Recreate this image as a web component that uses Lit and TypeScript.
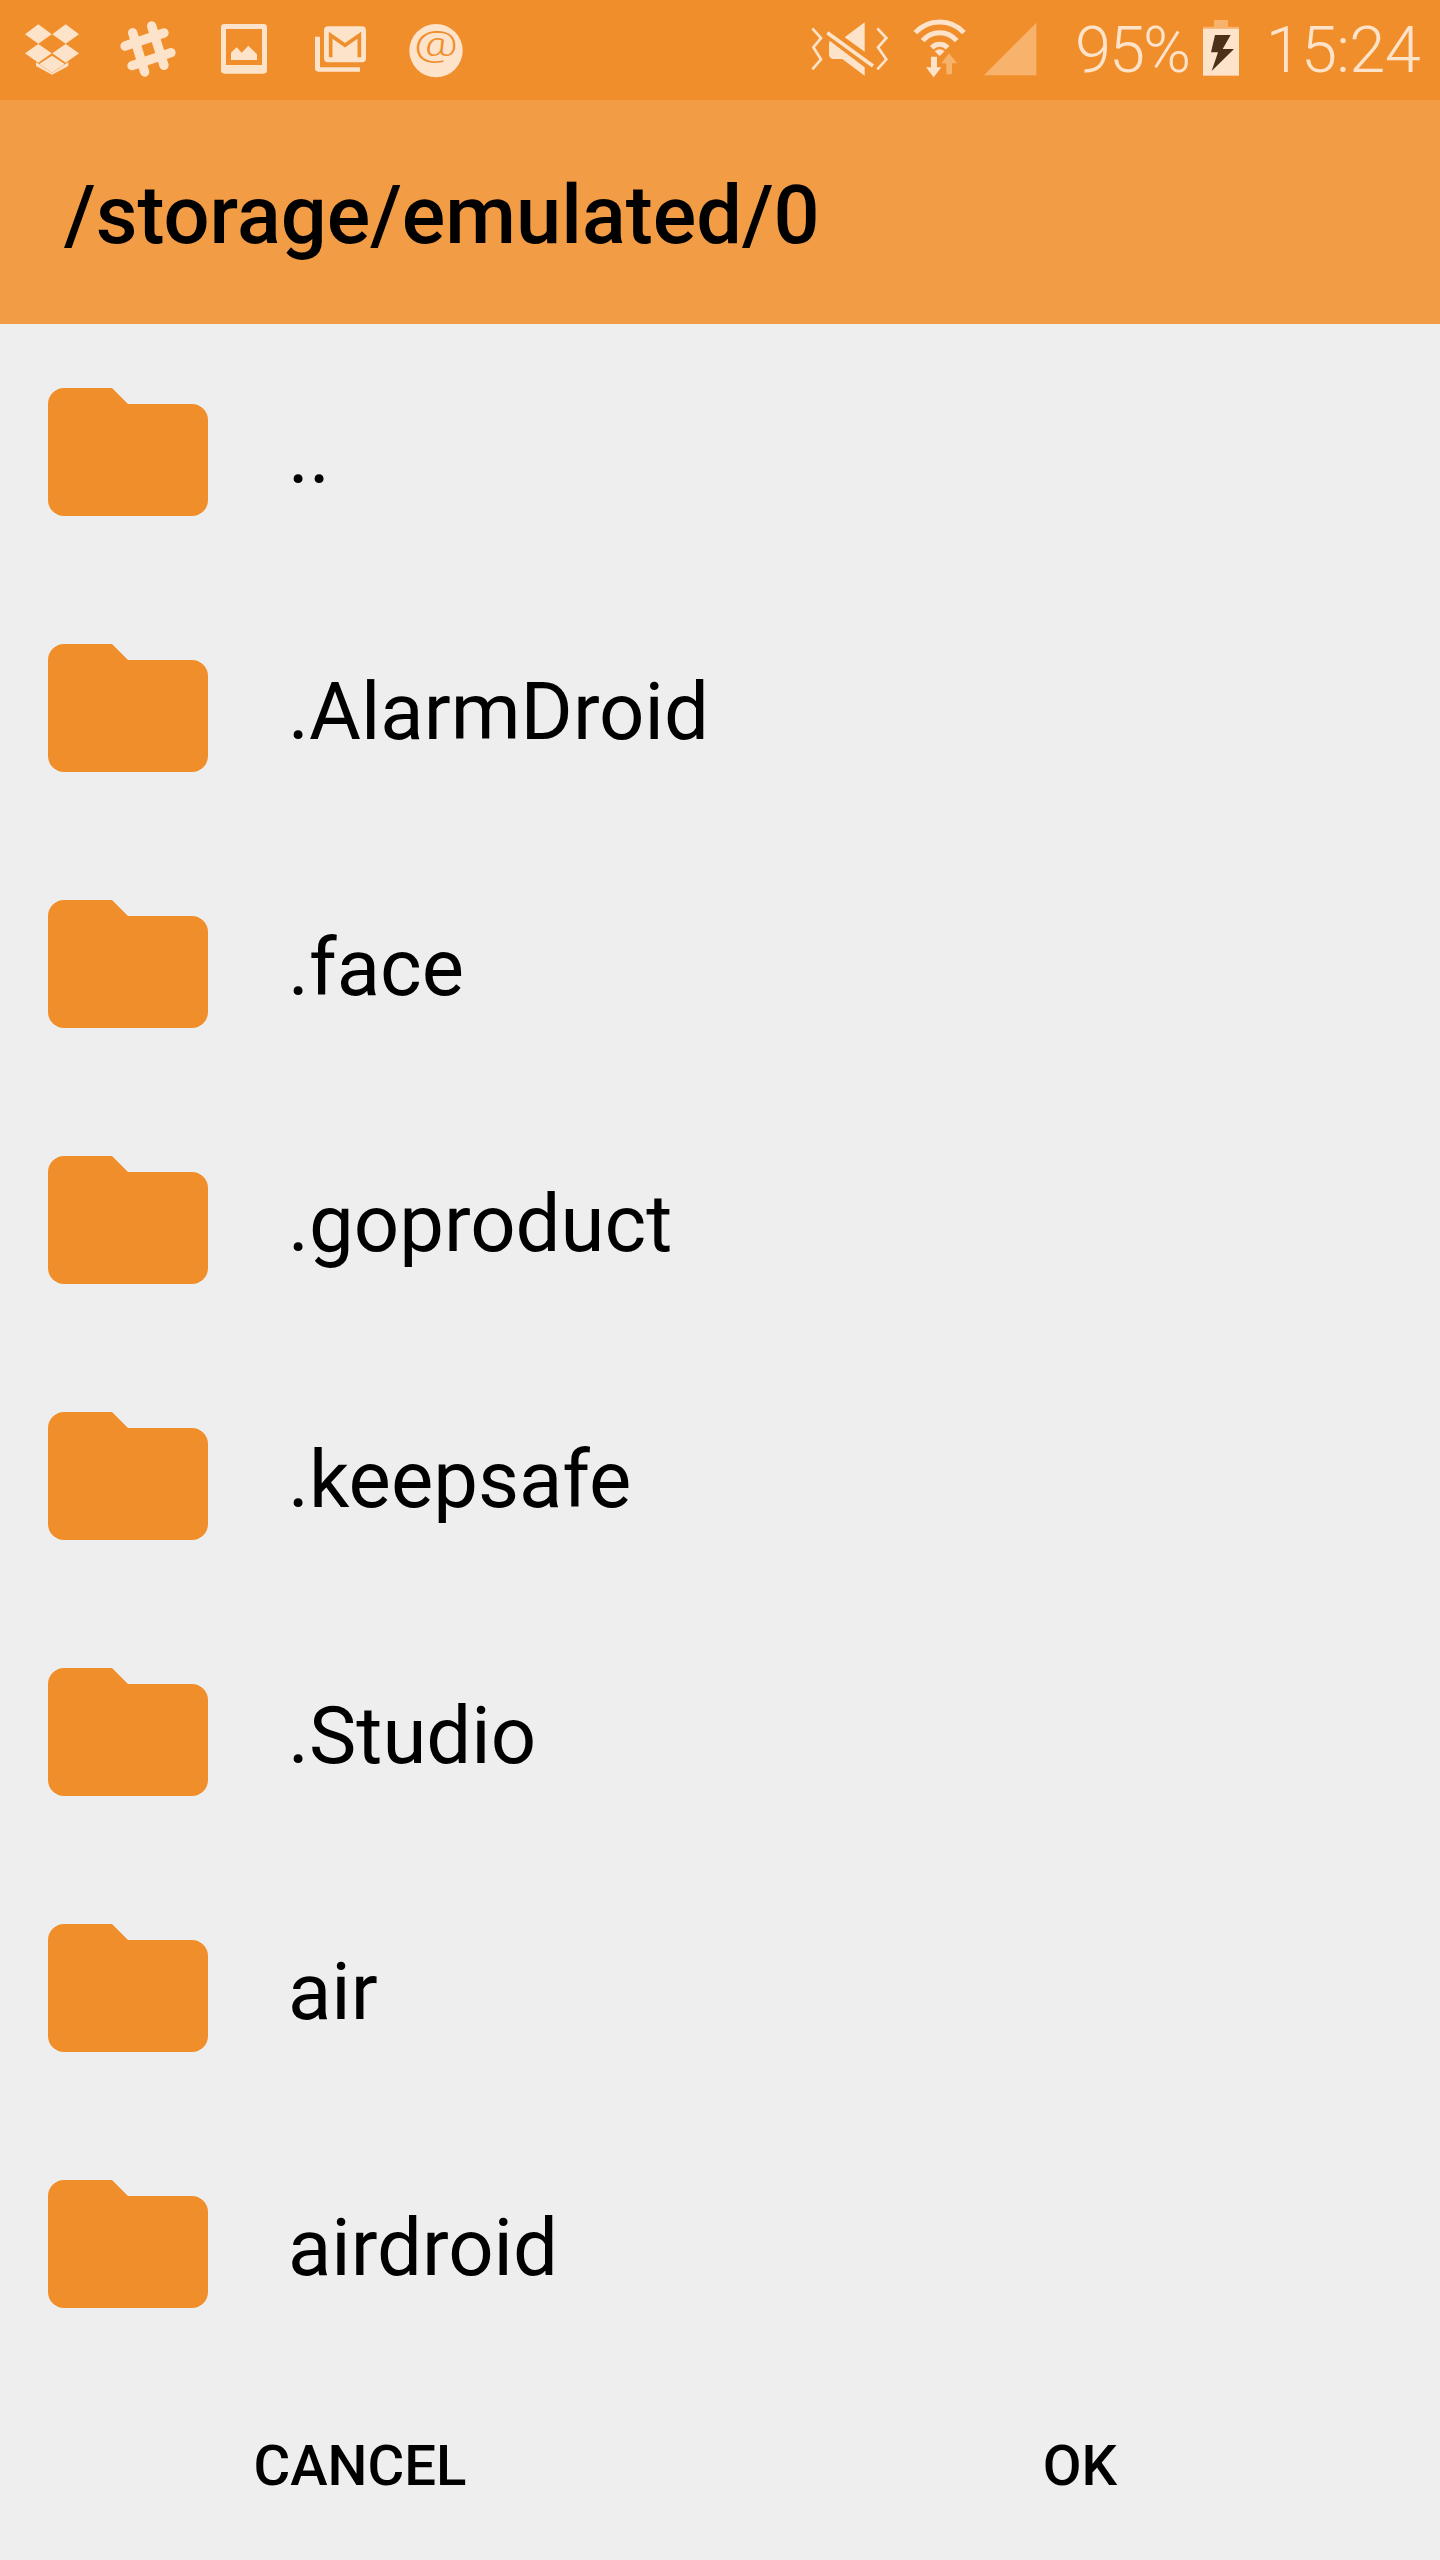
import { LitElement, html, css, svg } from 'lit';
import { customElement } from 'lit/decorators.js';

const FOLDERS = ['..', '.AlarmDroid', '.face', '.goproduct', '.keepsafe', '.Studio', 'air', 'airdroid'];

// left notification icons, drawn in 3x coordinates of a 192 box
const notifIcons = [
  svg`<svg class="notif" viewBox="60 54 192 192">
    <polygon points="75,103 115,73 155,103 115,131"/>
    <polygon points="157,103 197,73 237,103 197,131"/>
    <polygon points="75,160 115,132 155,160 115,188"/>
    <polygon points="157,160 197,132 237,160 197,188"/>
    <polygon points="156,167 194,192 156,218 118,192"/>
    <polygon points="108,186 156,219 205,186 205,198 156,224 108,198"/>
  </svg>`,
  svg`<svg class="notif" viewBox="348 54 192 192">
    <g class="slack">
      <line x1="398" y1="98" x2="434" y2="216"/>
      <line x1="455" y1="78" x2="492" y2="196"/>
      <line x1="375" y1="138" x2="492" y2="99"/>
      <line x1="396" y1="197" x2="513" y2="158"/>
    </g>
  </svg>`,
  svg`<svg class="notif" viewBox="636 54 192 192">
    <path fill-rule="evenodd" d="M673 72H791a10 10 0 0 1 10 10V211a10 10 0 0 1 -10 10H673a10 10 0 0 1 -10 -10V82a10 10 0 0 1 10 -10ZM678 87V195H786V87Z"/>
    <polygon points="693,180 693,158 710,142 725,158 745,137 771,163 771,180"/>
  </svg>`,
  svg`<svg class="notif" viewBox="924 54 192 192">
    <path d="M945 110H960V202H1080V215H955a10 10 0 0 1 -10 -10Z"/>
    <rect x="972" y="79" width="126" height="108" rx="12"/>
    <polyline class="cut" points="992,172 992,106 1035,136 1078,106 1078,172"/>
  </svg>`,
  svg`<svg class="notif" viewBox="1212 54 192 192">
    <circle cx="1308" cy="152" r="80"/>
    <text class="at" transform="translate(1308 169) scale(1 .72)" text-anchor="middle">@</text>
  </svg>`,
];

const muteIcon = svg`<svg class="mute" viewBox="36 0 232 240">
  <polyline class="zig" points="40,55 66,84 43,112 66,148 40,178"/>
  <polyline class="zig" points="235,55 262,84 237,112 262,148 235,178"/>
  <polygon points="137,82 197,37 197,125"/>
  <path d="M92 92L197 172V197L130 147H105Q90 147 90 132V100Z"/>
  <line class="slash" x1="85" y1="68" x2="222" y2="168"/>
</svg>`;

const wifiIcon = svg`<svg class="wifi" viewBox="340 0 168 240">
  <path class="arc" d="M350 68A99 99 0 0 1 496 68"/>
  <path class="arc" d="M372 92A66 66 0 0 1 474 92"/>
  <path class="arc" d="M399 113A33 33 0 0 1 447 113"/>
  <path d="M423 138L408 124Q423 112 438 124Z"/>
  <path d="M397 140H415V172H428L405 202L382 172H397Z"/>
  <path class="dim" d="M451 130L475 160H460V193H443V160H428Z"/>
</svg>`;

const signalIcon = svg`<svg class="signal" viewBox="552 0 162 240">
  <polygon class="dim" points="712,38 712,196 555,196"/>
</svg>`;

const batteryIcon = svg`<svg class="battery" viewBox="36 0 114 240">
  <path class="dim" d="M72 30H114V50H147V56H39V50H72Z"/>
  <rect x="39" y="56" width="108" height="141"/>
  <polygon class="bolt" points="75,75 122,75 98,117 132,117 65,183 84,127 63,127"/>
</svg>`;

const folderIcon = svg`<svg class="folder" viewBox="0 0 160 128">
  <path d="M16 0H64L80 16H144A16 16 0 0 1 160 32V112A16 16 0 0 1 144 128H16A16 16 0 0 1 0 112V16A16 16 0 0 1 16 0Z"/>
</svg>`;

@customElement('app-root')
export class AppRoot extends LitElement {
  static styles = css`
    :host {
      display: block;
      width: 1440px;
      height: 2560px;
      background: #eeeeee;
      font-family: Roboto, sans-serif;
      color: #000;
    }
    .status {
      height: 100px;
      background: #f18e2c;
      display: flex;
      align-items: center;
      justify-content: space-between;
      padding: 0 20px;
      box-sizing: border-box;
      color: #fde3ca;
    }
    .left, .right { display: flex; align-items: center; }
    .left { gap: 32px; }
    svg { display: block; fill: #fde3ca; }
    .notif { width: 64px; height: 64px; }
    .slack line { stroke: #fde3ca; stroke-width: 28; stroke-linecap: round; }
    .cut { fill: none; stroke: #f18e2c; stroke-width: 11; }
    .at { fill: #f18e2c; font-family: Roboto, sans-serif; font-size: 145px; font-weight: 300; }
    .mute { width: 77.33px; height: 80px; margin-right: 24px; }
    .wifi { width: 56px; height: 80px; margin-right: 15px; }
    .signal { width: 54px; height: 80px; margin-right: 38px; }
    .battery { width: 38px; height: 80px; margin: 0 25.5px 0 13px; }
    .zig { fill: none; stroke: #fde3ca; stroke-width: 8; }
    .slash { stroke: #fde3ca; stroke-width: 11; }
    .arc { fill: none; stroke: #fde3ca; stroke-width: 15; }
    .dim { fill: #f7b26c; }
    .bolt { fill: #4c3118; }
    .level, .clock { font-size: 65px; font-weight: 300; line-height: 100px; }
    .level { letter-spacing: -2px; }
    .clock { letter-spacing: -0.7px; }
    .title {
      height: 224px;
      background: #f39c46;
      display: flex;
      align-items: center;
      padding: 6px 0 0 64px;
      box-sizing: border-box;
      font-size: 81.2px;
      font-weight: 500;
    }
    .row {
      height: 256px;
      display: flex;
      align-items: center;
      padding-left: 48px;
      gap: 80px;
      font-size: 79.7px;
    }
    .row span { position: relative; top: 3px; }
    .folder { width: 160px; height: 128px; fill: #f18e2c; }
    .actions {
      height: 188px;
      display: grid;
      grid-template-columns: 1fr 1fr;
      align-items: center;
      justify-items: center;
      font-size: 56.3px;
      font-weight: 500;
    }
  `;

  render() {
    return html`
      <div class="status">
        <div class="left">${notifIcons}</div>
        <div class="right">
          ${muteIcon}${wifiIcon}${signalIcon}
          <span class="level">95%</span>
          ${batteryIcon}
          <span class="clock">15:24</span>
        </div>
      </div>
      <div class="title">/storage/emulated/0</div>
      ${FOLDERS.map(name => html`<div class="row">${folderIcon}<span>${name}</span></div>`)}
      <div class="actions"><span>CANCEL</span><span>OK</span></div>
    `;
  }
}
